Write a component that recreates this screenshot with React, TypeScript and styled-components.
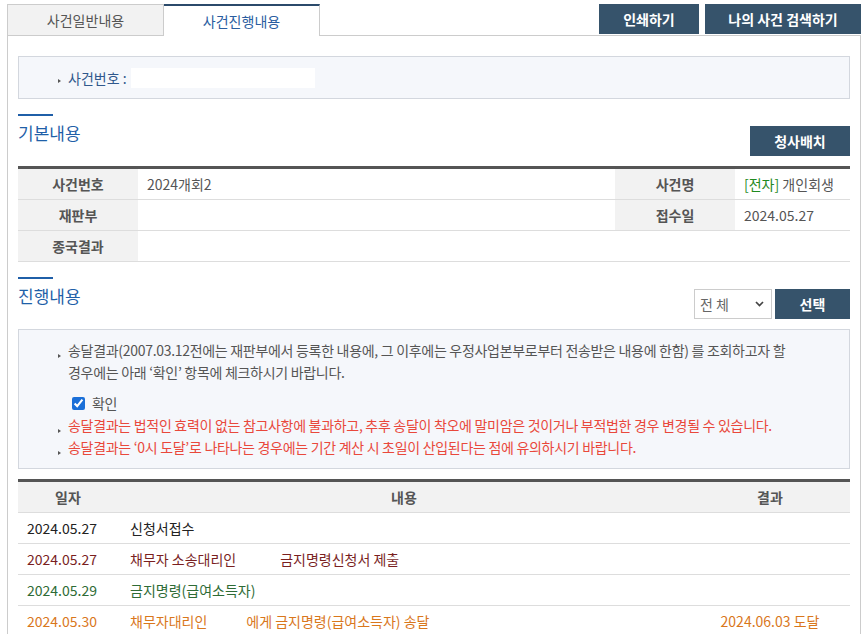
import styled, { createGlobalStyle } from 'styled-components'

const GlobalStyle = createGlobalStyle`
  html, body {
    margin: 0;
    padding: 0;
    background: #fff;
  }
  body {
    font-family: 'Noto Sans CJK KR', 'Noto Sans', sans-serif;
    font-size: 14px;
    color: #333;
  }
`

const Page = styled.div`
  width: 864px;
  box-sizing: border-box;
  padding: 4px 3px 0 7px;
`

const TopBar = styled.div`
  display: flex;
  justify-content: space-between;
  align-items: flex-start;
  height: 31px;
`

const Tabs = styled.div`
  display: flex;
  height: 31px;
`

const Tab = styled.div<{ $active?: boolean }>`
  box-sizing: border-box;
  width: ${(p) => (p.$active ? '156px' : '157px')};
  height: ${(p) => (p.$active ? '32px' : '31px')};
  display: flex;
  align-items: center;
  justify-content: center;
  font-size: 14px;
  color: ${(p) => (p.$active ? '#2a5d9f' : '#555')};
  background: ${(p) => (p.$active ? '#fff' : '#f2f2f2')};
  border: 1px solid #ccc;
  border-top: ${(p) => (p.$active ? '2px solid #2b4a6b' : '1px solid #ccc')};
  border-bottom: 0;
  border-left: ${(p) => (p.$active ? 'none' : '1px solid #ccc')};
  position: relative;
  z-index: 1;
`

const Actions = styled.div`
  display: flex;
  gap: 6px;
`

const DarkButton = styled.button<{ $w: number }>`
  width: ${(p) => p.$w}px;
  height: 30px;
  background: #36536b;
  color: #fff;
  border: 0;
  padding: 0;
  font-family: inherit;
  font-size: 14px;
  font-weight: 700;
  cursor: pointer;
`

const Panel = styled.div`
  border: 1px solid #ccc;
  padding: 20px 10px;
  min-height: 700px;
`

const CaseBox = styled.div`
  height: 41px;
  border: 1px solid #d3d7de;
  background: #f5f7fb;
  display: flex;
  align-items: center;
  padding-left: 39px;
  color: #30588c;
`

const Bullet = styled.span`
  display: inline-block;
  width: 0;
  height: 0;
  border-left: 3px solid #555;
  border-top: 2.5px solid transparent;
  border-bottom: 2.5px solid transparent;
  margin-right: 7px;
  margin-top: 6px;
`

const Hidden = styled.span<{ $w: number }>`
  display: inline-block;
  width: ${(p) => p.$w}px;
  height: 20px;
  background: #fff;
  margin-left: 4px;
`

const SectionHead = styled.div`
  display: flex;
  justify-content: space-between;
  align-items: flex-start;
  margin-top: 15px;
  margin-bottom: 10px;
`

const Title = styled.h2`
  margin: 0;
  font-size: 17px;
  font-weight: 400;
  color: #1f5fa8;
  line-height: 22px;
  &::before {
    content: '';
    display: block;
    width: 35px;
    height: 2px;
    background: #1f5fa8;
    margin-bottom: 6px;
  }
`

const HeadTools = styled.div`
  display: flex;
  gap: 3px;
  margin-top: 12px;
`

const Select = styled.div`
  box-sizing: border-box;
  width: 78px;
  height: 30px;
  border: 1px solid #ccc;
  background: #fff;
  display: flex;
  align-items: center;
  justify-content: space-between;
  padding: 0 7px 0 5px;
  color: #666;
  font-size: 14px;
  letter-spacing: 3px;
`

const Table = styled.table`
  width: 100%;
  border-collapse: collapse;
  border-top: 3px solid #555;
  table-layout: fixed;
`

const Th = styled.th<{ $w?: number }>`
  width: ${(p) => (p.$w ? `${p.$w}px` : 'auto')};
  height: 30px;
  background: #f2f2f2;
  color: #555;
  font-weight: 700;
  font-size: 14px;
  text-align: center;
  border-bottom: 1px solid #ddd;
  padding: 0;
`

const Td = styled.td<{ $color?: string; $align?: string; $pl?: number }>`
  height: 30px;
  padding: 0 9px 0 ${(p) => p.$pl ?? 9}px;
  color: ${(p) => p.$color ?? '#555'};
  text-align: ${(p) => p.$align ?? 'left'};
  border-bottom: 1px solid #ddd;
  font-size: 14px;
  font-weight: 400;
  white-space: nowrap;
`

const Clip = styled.span`
  display: inline-block;
  width: 74px;
  overflow: hidden;
  vertical-align: bottom;
`

const Green = styled.span`
  color: #1f8a1f;
`

const Notice = styled.ul`
  margin: 0;
  list-style: none;
  border: 1px solid #d3d7de;
  background: #f5f7fb;
  padding: 9px 20px 10px 49px;
  line-height: 22px;
  font-size: 14px;
  letter-spacing: -0.3px;
  word-break: keep-all;
  color: #555;
`

const Item = styled.li<{ $red?: boolean }>`
  color: ${(p) => (p.$red ? '#e9483b' : '#555')};
  &::before {
    content: '';
    display: inline-block;
    margin-left: -10px;
    margin-right: 7px;
    border-left: 3px solid #555;
    border-top: 2.5px solid transparent;
    border-bottom: 2.5px solid transparent;
    vertical-align: -2px;
  }
`

const CheckRow = styled.li`
  display: flex;
  align-items: center;
  gap: 7px;
  padding-left: 4px;
  margin-top: 9px;
  input {
    width: 13px;
    height: 13px;
    margin: 0;
    accent-color: #1a6fd8;
  }
`

const ProgTable = styled(Table)`
  margin-top: 10px;
`

const Gap = styled.span<{ $w: number }>`
  display: inline-block;
  width: ${(p) => p.$w}px;
`

const rows = [
  { date: '2024.05.27', color: '#222', content: <>신청서접수</>, result: '' },
  {
    date: '2024.05.27',
    color: '#7a1f1f',
    content: (
      <>
        채무자 소송대리인<Gap $w={44} />금지명령신청서 제출
      </>
    ),
    result: '',
  },
  { date: '2024.05.29', color: '#2e6b35', content: <>금지명령(급여소득자)</>, result: '' },
  {
    date: '2024.05.30',
    color: '#d9771c',
    content: (
      <>
        채무자대리인<Gap $w={39} />에게 금지명령(급여소득자) 송달
      </>
    ),
    result: '2024.06.03 도달',
  },
]

const Chevron = () => (
  <svg width="9" height="6" viewBox="0 0 9 6">
    <path d="M1 1 L4.5 4.5 L8 1" fill="none" stroke="#444" strokeWidth="1.7" />
  </svg>
)

export default function App() {
  return (
    <Page>
      <GlobalStyle />
      <TopBar>
        <Tabs>
          <Tab>사건일반내용</Tab>
          <Tab $active>사건진행내용</Tab>
        </Tabs>
        <Actions>
          <DarkButton $w={100}>인쇄하기</DarkButton>
          <DarkButton $w={156}>나의 사건 검색하기</DarkButton>
        </Actions>
      </TopBar>
      <Panel>
        <CaseBox>
          <Bullet />
          사건번호 :<Hidden $w={184} />
        </CaseBox>

        <SectionHead>
          <Title>기본내용</Title>
          <HeadTools>
            <DarkButton $w={100}>청사배치</DarkButton>
          </HeadTools>
        </SectionHead>
        <Table>
          <tbody>
            <tr>
              <Th $w={120}>사건번호</Th>
              <Td>
                <Clip>2024개회2</Clip>
              </Td>
              <Th $w={120}>사건명</Th>
              <Td style={{ width: 97 }}>
                <Green>[전자]</Green> 개인회생
              </Td>
            </tr>
            <tr>
              <Th>재판부</Th>
              <Td />
              <Th>접수일</Th>
              <Td>2024.05.27</Td>
            </tr>
            <tr>
              <Th>종국결과</Th>
              <Td colSpan={3} />
            </tr>
          </tbody>
        </Table>

        <SectionHead>
          <Title>진행내용</Title>
          <HeadTools>
            <Select>
              <span>전체</span>
              <Chevron />
            </Select>
            <DarkButton $w={75}>선택</DarkButton>
          </HeadTools>
        </SectionHead>
        <Notice>
          <Item>
            송달결과(2007.03.12전에는 재판부에서 등록한 내용에, 그 이후에는 우정사업본부로부터 전송받은 내용에 한함) 를 조회하고자 할
            경우에는 아래 ‘확인’ 항목에 체크하시기 바랍니다.
          </Item>
          <CheckRow>
            <input type="checkbox" checked readOnly />
            확인
          </CheckRow>
          <Item $red>송달결과는 법적인 효력이 없는 참고사항에 불과하고, 추후 송달이 착오에 말미암은 것이거나 부적법한 경우 변경될 수 있습니다.</Item>
          <Item $red>송달결과는 ‘0시 도달’로 나타나는 경우에는 기간 계산 시 초일이 산입된다는 점에 유의하시기 바랍니다.</Item>
        </Notice>

        <ProgTable>
          <thead>
            <tr>
              <Th $w={100}>일자</Th>
              <Th>내용</Th>
              <Th $w={160}>결과</Th>
            </tr>
          </thead>
          <tbody>
            {rows.map((r, i) => (
              <tr key={i}>
                <Td $color={r.color}>{r.date}</Td>
                <Td $color={r.color} $pl={12}>
                  {r.content}
                </Td>
                <Td $color={r.color} $align="center">
                  {r.result}
                </Td>
              </tr>
            ))}
          </tbody>
        </ProgTable>
      </Panel>
    </Page>
  )
}
